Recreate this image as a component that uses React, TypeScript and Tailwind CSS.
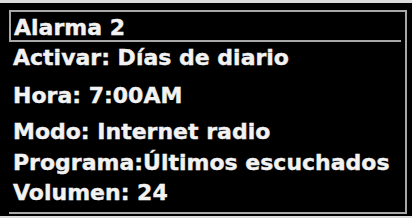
const rows = [
  { text: 'Activar: Días de diario', h: 'h-[38px]' },
  { text: 'Hora: 7:00AM', h: 'h-[36px]' },
  { text: 'Modo: Internet radio', h: 'h-[31px]' },
  { text: 'Programa:Últimos escuchados', h: 'h-[30px]' },
  { text: 'Volumen: 24', h: 'h-[30px]' },
]

export default function App() {
  return (
    <div className="w-[412px] h-[218px] bg-[#dcdcdc] pt-[3px] font-['DejaVu_Sans',sans-serif] font-bold text-[22px] text-[#f2f2f2] [-webkit-text-stroke:0.4px_#f2f2f2]">
      <div className="h-[213px] bg-black pt-[7px] pl-[9px]">
        <div className="w-[398px] h-[204px] border-t-2 border-r-2 border-b-2 border-[#a8a8a8] flex flex-col">
          <div className="w-[392px] h-[30px] border-l-2 border-b-2 border-[#a8a8a8] pl-[3px] pt-[2px] leading-[28px]">
            Alarma 2
          </div>
          <div className="flex flex-col pt-[1px] pl-[4px]">
            {rows.map((row) => (
              <div key={row.text} className={`${row.h} leading-[30px] whitespace-nowrap`}>
                {row.text}
              </div>
            ))}
          </div>
        </div>
      </div>
    </div>
  )
}
